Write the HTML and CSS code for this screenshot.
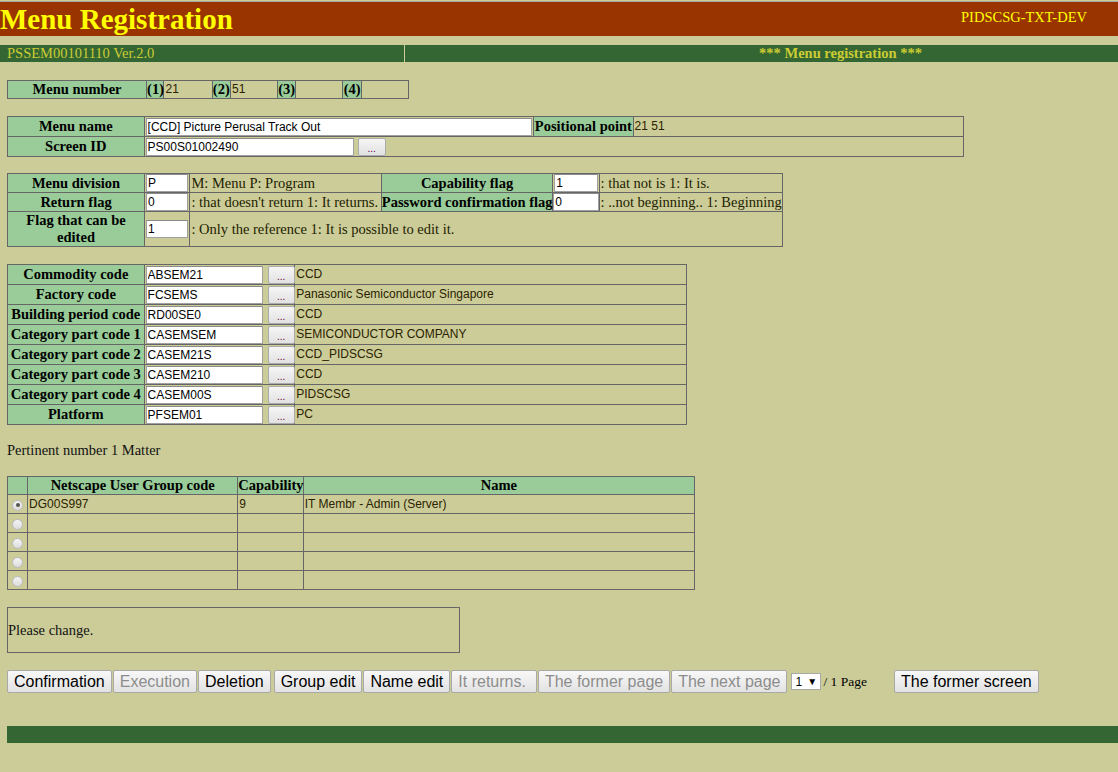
FILE: index.html
```html
<!DOCTYPE html>
<html>
<head>
<meta charset="utf-8">
<title>Menu Registration</title>
<link rel="stylesheet" href="styles.css">
</head>
<body>
<div class="header">
  <div class="title">Menu Registration</div>
  <div class="env">PIDSCSG-TXT-DEV</div>
</div>
<div class="subbar">
  <div class="sub-left">PSSEM00101110 Ver.2.0</div>
  <div class="sub-right">*** Menu registration ***</div>
</div>

<div class="content">
  <table class="grid t-num">
    <colgroup><col class="w137"><col class="w18"><col class="w48"><col class="w19"><col class="w47"><col class="w19"><col class="w47"><col class="w19"><col class="w47"></colgroup>
    <tr class="h18">
      <td class="lbl">Menu number</td>
      <td class="lbl tight">(1)</td><td class="val">21</td>
      <td class="lbl tight">(2)</td><td class="val">51</td>
      <td class="lbl tight">(3)</td><td class="val"></td>
      <td class="lbl tight">(4)</td><td class="val"></td>
    </tr>
  </table>

  <table class="grid t-name">
    <colgroup><col class="w137"><col class="w389"><col class="w100"><col class="w330"></colgroup>
    <tr class="h20">
      <td class="lbl">Menu name</td>
      <td><input class="txt full" value="[CCD] Picture Perusal Track Out" readonly></td>
      <td class="lbl nowrap tight">Positional point</td>
      <td class="val">21 51</td>
    </tr>
    <tr class="h20">
      <td class="lbl">Screen ID</td>
      <td colspan="3" class="nowrap"><input class="txt w207" value="PS00S01002490" readonly><button class="dots">...</button></td>
    </tr>
  </table>

  <table class="grid t-div">
    <colgroup><col class="w137"><col class="w46"><col class="w191"><col class="w171"><col class="w47"><col class="w183"></colgroup>
    <tr class="h19">
      <td class="lbl">Menu division</td>
      <td><input class="txt full" value="P" readonly></td>
      <td class="note">M: Menu P: Program</td>
      <td class="lbl">Capability flag</td>
      <td><input class="txt full" value="1" readonly></td>
      <td class="note">: that not is 1: It is.</td>
    </tr>
    <tr class="h19">
      <td class="lbl">Return flag</td>
      <td><input class="txt full" value="0" readonly></td>
      <td class="note nowrap">: that doesn't return 1: It returns.</td>
      <td class="lbl nowrap tight">Password confirmation flag</td>
      <td class="tight"><input class="txt full" value="0" readonly></td>
      <td class="note nowrap">: ..not beginning.. 1: Beginning</td>
    </tr>
    <tr class="h35">
      <td class="lbl">Flag that can be edited</td>
      <td><input class="txt full" value="1" readonly></td>
      <td class="note" colspan="4">: Only the reference 1: It is possible to edit it.</td>
    </tr>
  </table>

  <table class="grid t-code">
    <colgroup><col class="w137"><col class="w151"><col class="w391"></colgroup>
    <tr class="h20"><td class="lbl">Commodity code</td><td class="pick"><input class="txt w117" value="ABSEM21" readonly><button class="dots">...</button></td><td class="val">CCD</td></tr>
    <tr class="h20"><td class="lbl">Factory code</td><td class="pick"><input class="txt w117" value="FCSEMS" readonly><button class="dots">...</button></td><td class="val">Panasonic Semiconductor Singapore</td></tr>
    <tr class="h20"><td class="lbl nowrap tight">Building period code</td><td class="pick"><input class="txt w117" value="RD00SE0" readonly><button class="dots">...</button></td><td class="val">CCD</td></tr>
    <tr class="h20"><td class="lbl nowrap tight">Category part code 1</td><td class="pick"><input class="txt w117" value="CASEMSEM" readonly><button class="dots">...</button></td><td class="val">SEMICONDUCTOR COMPANY</td></tr>
    <tr class="h20"><td class="lbl nowrap tight">Category part code 2</td><td class="pick"><input class="txt w117" value="CASEM21S" readonly><button class="dots">...</button></td><td class="val">CCD_PIDSCSG</td></tr>
    <tr class="h20"><td class="lbl nowrap tight">Category part code 3</td><td class="pick"><input class="txt w117" value="CASEM210" readonly><button class="dots">...</button></td><td class="val">CCD</td></tr>
    <tr class="h20"><td class="lbl nowrap tight">Category part code 4</td><td class="pick"><input class="txt w117" value="CASEM00S" readonly><button class="dots">...</button></td><td class="val">PIDSCSG</td></tr>
    <tr class="h20"><td class="lbl">Platform</td><td class="pick"><input class="txt w117" value="PFSEM01" readonly><button class="dots">...</button></td><td class="val">PC</td></tr>
  </table>

  <p class="count">Pertinent number 1 Matter</p>

  <table class="grid t-group">
    <colgroup><col class="w21"><col class="w210"><col class="w66"><col class="w390"></colgroup>
    <tr class="h18">
      <td class="lbl"></td>
      <td class="lbl">Netscape User Group code</td>
      <td class="lbl tight">Capability</td>
      <td class="lbl">Name</td>
    </tr>
    <tr class="h19"><td class="rc"><span class="radio on"></span></td><td class="val">DG00S997</td><td class="val">9</td><td class="val">IT Membr - Admin (Server)</td></tr>
    <tr class="h19"><td class="rc"><span class="radio"></span></td><td></td><td></td><td></td></tr>
    <tr class="h19"><td class="rc"><span class="radio"></span></td><td></td><td></td><td></td></tr>
    <tr class="h19"><td class="rc"><span class="radio"></span></td><td></td><td></td><td></td></tr>
    <tr class="h19"><td class="rc"><span class="radio"></span></td><td></td><td></td><td></td></tr>
  </table>

  <div class="message">Please change.</div>

  <div class="actions">
    <button class="btn">Confirmation</button>
    <button class="btn" disabled>Execution</button>
    <button class="btn">Deletion</button>
    <button class="btn spaced">Group edit</button>
    <button class="btn">Name edit</button>
    <button class="btn wide" disabled>It returns.</button>
    <button class="btn" disabled>The former page</button>
    <button class="btn" disabled>The next page</button>
    <span class="sel"><span class="sel-v">1</span><span class="sel-a">&#9660;</span></span>
    <span class="pages">/ 1 Page</span>
    <button class="btn back">The former screen</button>
  </div>
</div>

<div class="footer"></div>
</body>
</html>
```
FILE: styles.css
```css
html, body {
  margin: 0;
  padding: 0;
}
body {
  background: #cccc99;
  font-family: "Liberation Serif", "Times New Roman", serif;
  font-size: 14.5px;
  color: #000;
}

.header {
  margin-top: 1px;
  border-top: 1px solid #a8a8a0;
  background: #993300;
  height: 34px;
  display: flex;
  justify-content: space-between;
  align-items: center;
}
.title {
  color: #ffff00;
  font-size: 29px;
  font-weight: bold;
  line-height: 1;
  padding-top: 1px;
}
.env {
  color: #ffff00;
  font-size: 14.5px;
  margin-right: 31px;
  padding-bottom: 3px;
}

.subbar {
  margin-top: 9px;
  display: flex;
  height: 17px;
  line-height: 17px;
}
.sub-left {
  width: 397px;
  padding-left: 7px;
  background: #336633;
  color: #cccc33;
  font-size: 14.5px;
}
.sub-right {
  flex: 1;
  margin-left: 1px;
  background: #336633;
  color: #cccc33;
  font-weight: bold;
  font-size: 14.5px;
  text-align: center;
  padding-left: 158px;
}

.content {
  padding-left: 7px;
}

.grid {
  border-collapse: collapse;
  table-layout: fixed;
  margin-top: 18px;
}
.grid td {
  border: 1px solid #666666;
  padding: 0 1px;
  vertical-align: middle;
  white-space: normal;
  line-height: 17px;
}
.grid td.nowrap { white-space: nowrap; }
.grid td.tight { padding: 0; }

.t-num { margin-top: 18px; width: 402px; }
.t-name { margin-top: 17px; width: 957px; }
.t-div { margin-top: 16px; width: 776px; }
.t-code { margin-top: 17px; width: 680px; }
.t-group { margin-top: 0; width: 688px; }

.w18 { width: 17px; }
.w19 { width: 18px; }
.w21 { width: 20px; }
.w46 { width: 45px; }
.w47 { width: 46px; }
.w48 { width: 47px; }
.w66 { width: 65px; }
.w100 { width: 99px; }
.w137 { width: 136px; }
.w151 { width: 150px; }
.w171 { width: 170px; }
.w183 { width: 182px; }
.w191 { width: 190px; }
.w210 { width: 209px; }
.w330 { width: 329px; }
.w389 { width: 388px; }
.w390 { width: 389px; }
.w391 { width: 390px; }

.h18 { height: 18px; }
.h19 { height: 19px; }
.h20 { height: 20px; }
.h35 { height: 35px; }

.lbl {
  background: #99cc99;
  font-weight: bold;
  text-align: center;
}

.val {
  font-family: "Liberation Sans", Arial, sans-serif;
  font-size: 12px;
  color: #2b2200;
}
.note {
  font-size: 14.5px;
  color: #222200;
}

.grid td.pick {
  padding: 0 0 0 1px;
  white-space: nowrap;
}

.txt {
  box-sizing: border-box;
  height: 18px;
  margin: 0;
  padding: 0 1px;
  border: 1px solid #a0a0a0;
  border-top-color: #8a8a8a;
  background: #fff;
  font-family: "Liberation Sans", Arial, sans-serif;
  font-size: 12px;
  color: #000;
  vertical-align: top;
  outline: none;
}
.txt.full { width: 100%; }
.txt.w207 { width: 208px; }
.txt.w117 { width: 117px; }

.dots {
  box-sizing: border-box;
  width: 28px;
  height: 18px;
  margin: 0 0 0 4px;
  padding: 4px 0 0;
  border: 1px solid #ababab;
  border-radius: 2px;
  background: linear-gradient(#f6f6f6, #e1e1e1);
  font-family: "Liberation Sans", Arial, sans-serif;
  font-size: 10px;
  line-height: 10px;
  color: #660033;
  vertical-align: top;
}
.pick .dots { width: 27px; margin-left: 5px; }

.count {
  margin: 15px 0 16px;
  font-size: 14.5px;
  line-height: 20px;
  color: #111;
}

.grid td.rc { padding: 0; text-align: center; }
.radio {
  display: inline-block;
  box-sizing: border-box;
  width: 11px;
  height: 11px;
  border-radius: 50%;
  border: 1px solid #b9b9b9;
  background: linear-gradient(#f4f4f4, #dcdcdc);
  vertical-align: middle;
  position: relative;
}
.radio.on::after {
  content: "";
  position: absolute;
  left: 2.5px;
  top: 2.5px;
  width: 4px;
  height: 4px;
  border-radius: 50%;
  background: #555;
}

.message {
  box-sizing: border-box;
  margin-top: 17px;
  width: 453px;
  height: 46px;
  border: 1px solid #666666;
  display: flex;
  align-items: center;
  font-size: 14.5px;
  color: #111;
}

.actions {
  margin-top: 17px;
  display: flex;
  align-items: center;
  gap: 1px;
  height: 23px;
}
.btn {
  box-sizing: border-box;
  height: 23px;
  margin: 0;
  padding: 0 6px;
  border: 1px solid #a9a9a9;
  border-radius: 2px;
  background: linear-gradient(#f8f8f8, #e2e2e2);
  font-family: "Liberation Sans", Arial, sans-serif;
  font-size: 16px;
  color: #000;
}
.btn:disabled { color: #8d8d8d; }
.btn.spaced { margin-left: 2px; }
.btn.wide { padding-right: 10px; }
.sel {
  margin-left: 3px;
  box-sizing: border-box;
  width: 30px;
  height: 17px;
  background: #fff;
  border: 1px solid #a9a9a9;
  display: inline-flex;
  align-items: center;
  padding-left: 3px;
  font-family: "Liberation Sans", Arial, sans-serif;
  font-size: 12px;
}
.sel-a { font-size: 10px; margin-left: 5px; }
.pages {
  margin-left: 1px;
  font-size: 13.5px;
}
.back { margin-left: 26px; }

.footer {
  margin: 33px 0 0 7px;
  height: 17px;
  background: #336633;
}
```
